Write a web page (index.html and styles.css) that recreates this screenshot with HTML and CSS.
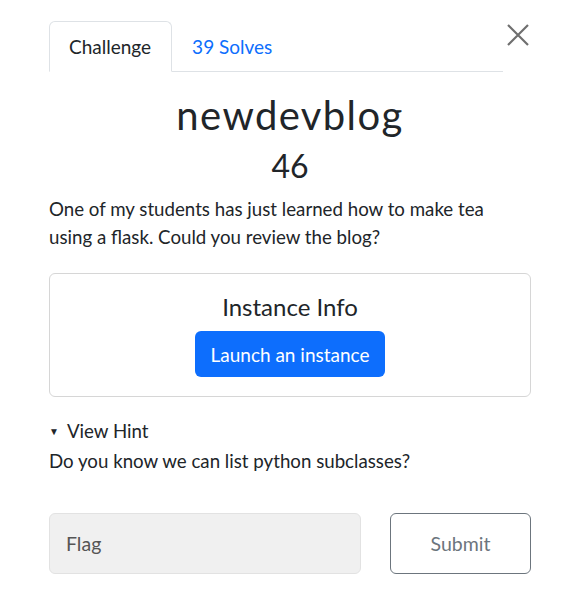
FILE: index.html
```html
<!DOCTYPE html>
<html>
<head>
<meta charset="utf-8">
<link rel="stylesheet" href="styles.css">
</head>
<body>
<div class="modal">
  <div class="header">
    <ul class="tabs">
      <li class="tab active">Challenge</li>
      <li class="tab link">39 Solves</li>
    </ul>
    <div class="close" aria-label="Close">
      <svg width="24" height="24" viewBox="0 0 24 24"><path d="M2 2 L22 22 M22 2 L2 22" stroke="#6f6f6f" stroke-width="2.2" fill="none"/></svg>
    </div>
  </div>
  <h2 class="title">newdevblog</h2>
  <h3 class="value">46</h3>
  <p class="desc">One of my students has just learned how to make tea using a flask. Could you review the blog?</p>
  <div class="card">
    <div class="card-title">Instance Info</div>
    <button class="btn-primary">Launch an instance</button>
  </div>
  <div class="hint">
    <div class="summary"><span class="arrow">▼</span>View Hint</div>
    <div class="hint-text">Do you know we can list python subclasses?</div>
  </div>
  <div class="submit-row">
    <div class="flag">Flag</div>
    <button class="btn-outline">Submit</button>
  </div>
</div>
</body>
</html>
```
FILE: styles.css
```css
html, body { margin: 0; padding: 0; background: #fff; }
body { font-family: Lato, "Open Sans", sans-serif; color: #212529; }
.modal { width: 482px; padding: 21px 0 0 49px; }
.header { display: flex; align-items: flex-start; }
.tabs { list-style: none; margin: 0; padding: 0; display: flex; border-bottom: 1px solid #dee2e6; width: 454px; }
.tab { font-size: 19px; line-height: 27px; padding: 11px 20px 11px 19px; margin-bottom: -1px; border: 1px solid transparent; border-radius: 6px 6px 0 0; }
.tab.active { border-color: #dee2e6 #dee2e6 #fff; background: #fff; color: #212529; }
.tab.link { color: #0d6efd; }
.close { margin-left: 2px; padding-top: 2px; width: 26px; display: flex; justify-content: center; }
.title { text-align: center; font-weight: 400; font-size: 40px; letter-spacing: 1.4px; margin: 18px 0 0; line-height: 50px; }
.value { text-align: center; font-weight: 400; font-size: 32px; margin: 4px 0 0; line-height: 44px; }
.desc { font-size: 18.7px; line-height: 28px; margin: 7px 0 0; }
.card { margin-top: 22px; border: 1px solid #d6d6d6; border-radius: 6px; height: 122px; display: flex; flex-direction: column; align-items: center; }
.card-title { font-size: 24px; line-height: 30px; margin-top: 18px; }
.btn-primary { margin-top: 9px; font-family: inherit; font-size: 19px; color: #fff; background: #0d6efd; border: none; border-radius: 6px; padding: 0; height: 46px; width: 190px; white-space: nowrap; }
.hint { margin-top: 20px; }
.summary { font-size: 18.7px; line-height: 28px; display: flex; align-items: center; }
.arrow { font-size: 10px; margin-right: 8px; }
.hint-text { font-size: 18.7px; line-height: 28px; margin-top: 2px; }
.submit-row { display: flex; justify-content: space-between; margin-top: 38px; }
.flag { box-sizing: border-box; width: 312px; height: 61px; background: #f0f0f0; border: 1px solid #e2e2e2; border-radius: 6px; font-size: 19.5px; color: #555; padding-left: 16px; display: flex; align-items: center; }
.btn-outline { box-sizing: border-box; width: 141px; height: 61px; background: #fff; border: 1px solid #6c757d; border-radius: 6px; font-family: inherit; font-size: 19.5px; color: #6c757d; }
```
